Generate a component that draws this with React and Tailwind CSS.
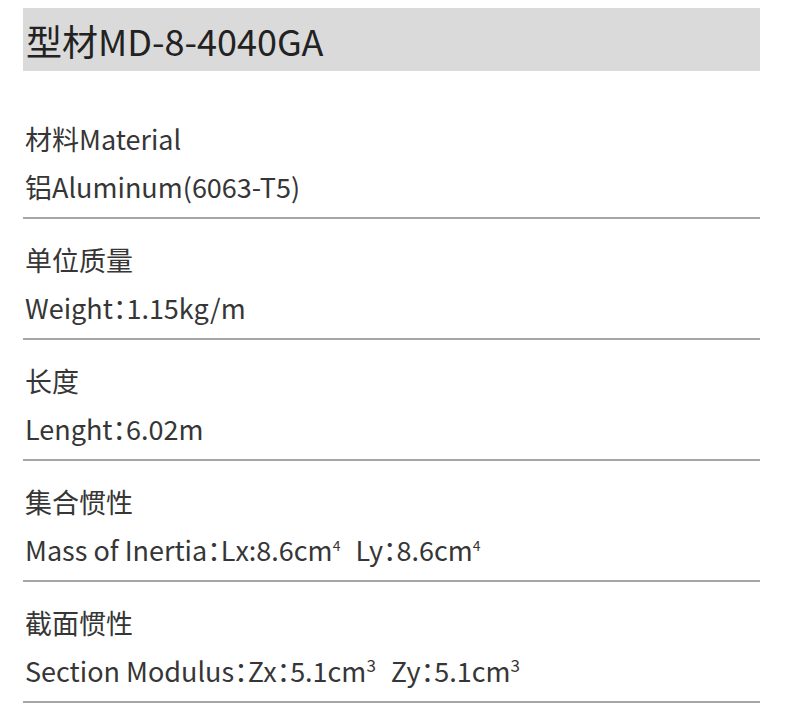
import React from 'react'

const C = () => <span className="[font-feature-settings:'palt']">：</span>
const Gap = () => <span className="inline-block w-[15px]" />

const rows = [
  { label: '材料Material', value: <>铝Aluminum(6063-T5)</> },
  { label: '单位质量', value: <>Weight<C />1.15kg/m</> },
  { label: '长度', value: <>Lenght<C />6.02m</> },
  {
    label: '集合惯性',
    value: (
      <>
        Mass of Inertia<C />Lx:8.6cm<sup className="text-[14px] -top-[0.75em]">4</sup>
        <Gap />Ly<C />8.6cm
        <sup className="text-[14px] -top-[0.75em]">4</sup>
      </>
    ),
  },
  {
    label: '截面惯性',
    value: (
      <>
        Section Modulus<C />Zx<C />5.1cm<sup className="text-[17px] -top-[0.6em]">3</sup>
        <Gap />Zy<C />5.1cm
        <sup className="text-[17px] -top-[0.6em]">3</sup>
      </>
    ),
  },
]

const App = () => {
  return (
    <div
      className="w-[790px] h-[716px] bg-white text-[#363636] pt-2 px-[23px]"
      style={{ fontFamily: '"Noto Sans CJK SC", "Noto Sans", sans-serif' }}
    >
      <div className="w-[737px] h-[63px] bg-[#dadada] flex items-center pl-[3px]">
        <h1 className="text-[36px] leading-none text-[#222222]">型材MD-8-4040GA</h1>
      </div>
      <div className="mt-[41px] w-[737px] flex flex-col">
        {rows.map((row, index) => (
          <div
            key={index}
            className={`border-b-2 border-[#a6a6a6] pb-[5px] ${index === 0 ? '' : 'pt-[14px]'}`}
          >
            <div className="text-[27px] leading-[50px] pl-[2px] pt-[2px]">{row.label}</div>
            <div className="text-[27px] leading-[50px] pl-[2px] -mt-[2px]">{row.value}</div>
          </div>
        ))}
      </div>
    </div>
  )
}

export default App
